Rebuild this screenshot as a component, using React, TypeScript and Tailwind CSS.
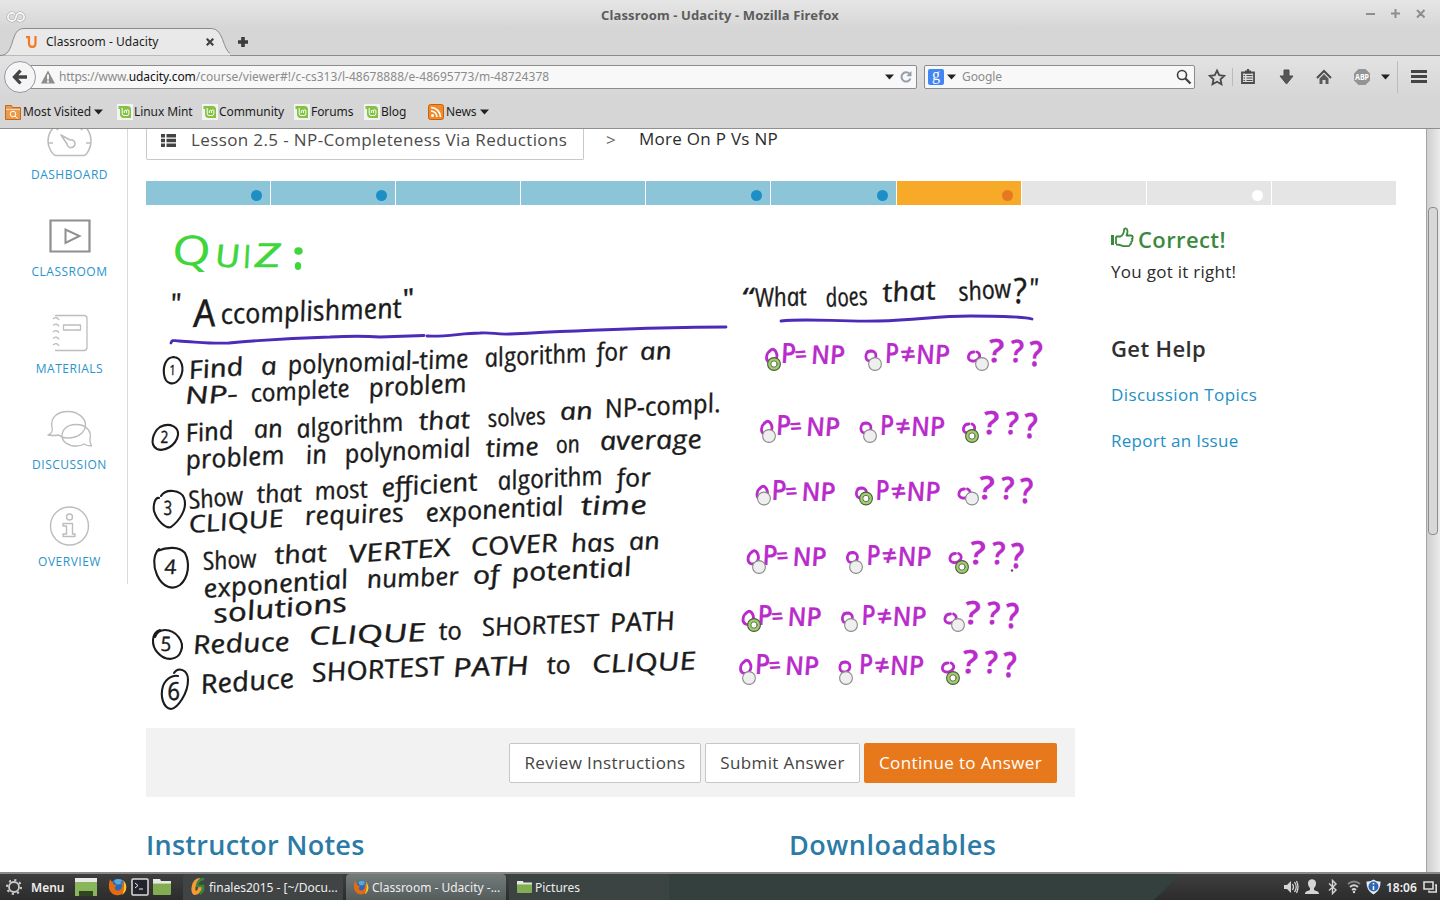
import React from "react";

type Word = [string, number, number, number, number, number?];

const ink: Word[] = [
  ['"', 172, 313, 11, 27, -2],
  ["A", 195, 327, 22, 38],
  ["ccomplishment", 222, 324, 181, 28, -2],
  ['"', 405, 308, 12, 26, -8],
  ["1", 170, 375, 6, 14, 0],
  ["Find", 190, 379, 55, 25, -4],
  ["a", 262, 375, 16, 25],
  ["polynomial-time", 289, 374, 181, 26, -2],
  ["algorithm", 486, 367, 102, 26, -3],
  ["for", 598, 361, 31, 25, -2],
  ["an", 641, 360, 32, 24],
  ["NP-", 186, 404, 53, 24, -2],
  ["complete", 252, 402, 99, 25, -3],
  ["problem", 370, 397, 98, 26, -3],
  ["2", 161, 443, 8, 17, 0],
  ["Find", 187, 442, 48, 25, -4],
  ["an", 255, 438, 29, 25],
  ["algorithm", 298, 438, 107, 26, -4],
  ["that", 420, 430, 51, 25, -2],
  ["solves", 489, 427, 58, 24, -3],
  ["an", 561, 420, 33, 24],
  ["NP-compl.", 606, 418, 116, 26, -3],
  ["problem", 187, 469, 99, 26, -3],
  ["in", 307, 464, 21, 26],
  ["polynomial", 346, 463, 126, 26, -3],
  ["time", 487, 457, 53, 25],
  ["on", 557, 453, 24, 24],
  ["average", 601, 450, 102, 26, -1],
  ["3", 164, 515, 9, 20, 0],
  ["Show", 190, 509, 55, 25, -5],
  ["that", 258, 503, 45, 25, -2],
  ["most", 316, 500, 53, 25, -3],
  ["efficient", 383, 497, 96, 26, -4],
  ["algorithm", 499, 490, 105, 26, -3],
  ["for", 618, 487, 34, 25, -2],
  ["CLIQUE", 190, 533, 95, 24, -4],
  ["requires", 306, 525, 99, 26, -2],
  ["exponential", 427, 522, 138, 26, -3],
  ["time", 582, 515, 66, 26, -1],
  ["4", 165, 574, 12, 20, 0],
  ["Show", 204, 570, 54, 25, -3],
  ["that", 276, 564, 52, 25, -3],
  ["VERTEX", 350, 563, 102, 25, -4],
  ["COVER", 472, 556, 87, 25, -3],
  ["has", 572, 552, 44, 25, -1],
  ["an", 630, 550, 31, 24],
  ["exponential", 205, 598, 145, 26, -4],
  ["number", 368, 588, 92, 25, -2],
  ["of", 474, 584, 27, 25],
  ["potential", 513, 582, 120, 26, -3],
  ["solutions", 215, 623, 134, 26, -5],
  ["5", 161, 651, 11, 20, 0],
  ["Reduce", 194, 654, 97, 26, -2],
  ["CLIQUE", 310, 645, 117, 25, -2],
  ["to", 440, 640, 23, 25],
  ["SHORTEST", 483, 636, 117, 25, -2],
  ["PATH", 611, 632, 65, 26, -2],
  ["6", 168, 700, 13, 25, 0],
  ["Reduce", 202, 694, 94, 27, -4],
  ["SHORTEST", 313, 682, 132, 26, -3],
  ["PATH", 454, 677, 76, 26, -2],
  ["to", 548, 674, 24, 25],
  ["CLIQUE", 593, 673, 104, 25, -2],
  ["“", 743, 306, 12, 25, -2],
  ["What", 756, 307, 52, 26, -2],
  ["does", 827, 307, 42, 26, -3],
  ["that", 884, 302, 53, 27, -3],
  ["show", 960, 301, 53, 26, -4],
  ["?", 1014, 303, 14, 35, 0],
  ['"', 1030, 297, 10, 26, 0],
];

const quizWords: Word[] = [
  ["Q", 173, 265, 39, 41, 0],
  ["U", 216, 267, 25, 31, 0],
  ["I", 244, 268, 8, 32, 0],
  ["Z", 255, 267, 27, 33, 0],
];

const rows = [
  { dx: 0, dy: 0, y: 364, xs: [774, 875, 982], on: 0 },
  { dx: -5, dy: 72, y: 436, xs: [769, 870, 972], on: 2 },
  { dx: -9.5, dy: 137, y: 498.5, xs: [764, 866, 972], on: 1 },
  { dx: -18.5, dy: 201.5, y: 567, xs: [759, 856, 962], on: 2 },
  { dx: -23.5, dy: 262, y: 625, xs: [754, 851, 958], on: 0 },
  { dx: -26, dy: 311, y: 678, xs: [749, 846, 953], on: 2 },
];

const optionWords: Word[] = [
  ["P", 782, 363, 15, 28, 0],
  ["=", 796, 363, 12, 24, -3],
  ["NP", 812, 364, 34, 26, 0],
  ["P", 886, 363, 14, 28, 0],
  ["≠", 902, 364, 15, 27, -3],
  ["NP", 917, 364, 34, 27, 0],
  ["?", 989, 362, 16, 32, 0],
  ["?", 1011, 362, 14, 31, 0],
  ["?", 1030, 366, 14, 35, 0],
];

function Hand({ w, color, weight, stroke }: { w: Word; color: string; weight?: number; stroke?: number }) {
  const [t, x, y, len, size, rot = -2] = w;
  return (
    <text
      transform={`translate(${x} ${y}) rotate(${rot}) skewX(8)`}
      fontSize={size}
      textLength={len}
      lengthAdjust="spacingAndGlyphs"
      fill={color}
      stroke={color}
      strokeWidth={stroke ?? 0.35}
      fontWeight={weight ?? 400}
      fontStyle="italic"
      fontFamily="'Open Sans', 'Noto Sans', sans-serif"
    >
      {t}
    </text>
  );
}

function QuizCanvas() {
  return (
    <svg viewBox="146 205 929 523" className="block h-[523px] w-[929px]" fill="none" strokeLinecap="round">
      {quizWords.map((w, i) => (
        <Hand key={i} w={w} color="#3fd53c" stroke={i === 0 ? 0.1 : 0.6} />
      ))}
      <g fill="#3fd53c">
        <ellipse cx="298.5" cy="251" rx="4.2" ry="3.8" />
        <ellipse cx="298" cy="266" rx="3.2" ry="4" />
      </g>
      {ink.map((w, i) => (
        <Hand key={i} w={w} color="#1b1b1b" />
      ))}
      <g stroke="#4b2bb8" strokeWidth="2.8">
        <path d="M171 343C172 339 174 341 179 341C198 342 213 344 229 343C262 340 290 338 330 337C350 336 366 336 380 337L424 335.500M427 336C447 337 462 333 480 333C493 332 496 335 510 334C570 331 660 327 726 327" />
        <path d="M781 321C808 318 838 322 878 321C920 320 935 316 970 316C995 316 1022 316 1032 319" />
      </g>
      <g stroke="#1b1b1b" strokeWidth="2.1">
        <path d="M174 357C166 357 163 366 164 374C165 384 174 387 180 378C185 369 182 357 173 357" />
        <path d="M160 427C170 422 179 427 178 435C176 446 164 452 157 449C149 445 153 432 160 427" />
        <path d="M159 498C155 497 153 505 154 511C157 521 166 529 171 527C179 521 188 509 184 498C181 490 166 488 161 496" />
        <path d="M159 549C153 555 153 566 157 575C163 588 173 590 180 585C189 577 190 563 185 553C179 546 167 547 157 551" />
        <path d="M160 630C151 633 151 646 158 653C166 662 178 660 181 651C185 642 176 630 165 630C160 630 157 632 155 637" />
        <path d="M174 673C178 667 188 669 188 680C188 693 178 708 171 709C163 708 160 696 163 686C166 678 173 675 178 676" />
      </g>
      {rows.map((r, ri) => (
        <g key={ri}>
          <g transform={`translate(${r.dx} ${r.dy})`}>
            {optionWords.map((w, i) => (
              <Hand key={i} w={w} color="#b92ccb" weight={600} stroke={0.2} />
            ))}
            <g stroke="#b92ccb" strokeWidth="2.800">
              <path d="M771 350C766 353 765 360 769 362C774 364 779 358 776 352C774 348 771 349 770 351" />
              <path d="M870 351C864 353 865 361 870 361C877 361 878 352 872 351C869 351 867 352 867 353" />
              <path d="M974 352C968 352 966 360 972 361C978 362 983 355 977 352" />
            </g>
          </g>
          {r.xs.map((x, i) => (
            <g key={x}>
              <circle cx={x} cy={r.y} r="6.4" fill={r.on === i ? "#9fd06a" : "#efefef"} stroke={r.on === i ? "#4d5a42" : "#8a8a8a"} strokeWidth="1.1" />
              {r.on === i && <circle cx={x} cy={r.y} r="3.2" fill="#fff" stroke="#5e704e" strokeWidth="1" />}
            </g>
          ))}
        </g>
      ))}
      <circle cx="1012" cy="570.5" r="1.2" fill="#555" />
    </svg>
  );
}

function Caret() {
  return (
    <svg viewBox="0 0 9 6" className="h-[6px] w-[9px] shrink-0">
      <path d="M0 .5h9L4.500 5.500z" fill="#222" />
    </svg>
  );
}

function MintIcon() {
  return (
    <svg viewBox="0 0 16 16" className="h-4 w-4 shrink-0">
      <rect width="16" height="16" fill="#f3f3f3" />
      <path d="M1.500 2H10.500a3.500 3.500 0 0 1 3.500 3.500V14H7a4 4 0 0 1-4-4V5H1.500z" fill="#84c341" />
      <path d="M5.200 4v5.500a2 2 0 0 0 2 2h2.700a2 2 0 0 0 2-2V7a1.200 1.200 0 0 0-2.400 0v2M9.500 7a1.200 1.200 0 0 0-2.200 0v2" fill="none" stroke="#fff" strokeWidth="1" />
    </svg>
  );
}

function Folder() {
  return (
    <svg viewBox="0 0 18 16" className="h-full w-full" preserveAspectRatio="none">
      <path d="M0 0h7l1 2h10v4H0z" fill="#e8e8e8" />
      <rect y="4" width="18" height="12" rx="1" fill="#82ad52" />
      <path d="M0 4.500h18" stroke="#b8d795" />
    </svg>
  );
}

function FirefoxIcon() {
  return (
    <svg viewBox="0 0 18 18" className="h-full w-full">
      <circle cx="9" cy="9" r="8.200" fill="#2c6bb3" />
      <path d="M5 3c3-3 7-2 9 0-2 0-3 1-2 3-2 0-3 1-5 0z" fill="#5aa9de" />
      <path d="M1 1c1 2 2 3 3 3-1 2 1 3 3 3 0 2-2 2-1 4 1 2 4 2 6 0 2-3 1-5 0-7 3 1 3 4 3 5 1-2 1-4 0-6 3 3 3 8 0 11-4 5-11 4-14-1C-1 9 0 5 1 1z" fill="#e66b10" />
      <path d="M14 2c4 4 5 11-1 15 2-4 3-9 1-15z" fill="#f9c831" />
    </svg>
  );
}

function Toolbars() {
  return (
    <div className="flex h-[129px] shrink-0 flex-col border-b border-[#8f8f8f] bg-[#d6d6d6] font-['Noto_Sans',sans-serif] text-[12px] text-[#1d1d1d]">
      <div className="relative flex h-7 shrink-0 items-center justify-center bg-gradient-to-b from-[#e6e6e6] to-[#d6d6d6] pt-[3px] text-[13px] font-bold text-[#5c5c5c]">
        <span className="tracking-[0.13px]">Classroom - Udacity - Mozilla Firefox</span>
        <svg viewBox="0 0 20 14" className="absolute left-[6px] top-[10px] h-[14px] w-5" fill="none">
          <path d="M9 4.500A4 4 0 1 0 9 9.500L11 4.500A4 4 0 1 1 11 9.500" stroke="#aaa" strokeWidth="3" />
          <path d="M9 4.500A4 4 0 1 0 9 9.500L11 4.500A4 4 0 1 1 11 9.500" stroke="#f6f6f6" strokeWidth="1.800" />
        </svg>
        <svg viewBox="0 0 62 12" className="absolute right-[13px] top-2 h-3 w-[62px]" stroke="#8e8e8e" strokeWidth="2">
          <path d="M1 6h9M26 5.500h9M30.500 1v9M52 2l7.500 7.500M59.500 2L52 9.500" />
        </svg>
      </div>
      <div className="flex h-7 shrink-0">
        <div className="relative flex h-7 w-[230px] shrink-0 items-center">
          <svg viewBox="0 0 230 28" className="absolute inset-0 h-7 w-[230px]">
            <path d="M0 27.500C16 27.500 9 .5 24 .5H211C226 .5 221 27.500 236 27.500V28H0z" fill="#e9e9e9" stroke="#8b8b8b" />
          </svg>
          <svg viewBox="0 0 12 13" className="relative ml-[26px] h-[13px] w-3" fill="none" stroke="#f07a27" strokeWidth="2.200">
            <path d="M0 1.200h3v6c0 5 6.500 5 6.500 0V0" />
          </svg>
          <span className="relative ml-2 w-[158px] whitespace-nowrap tracking-[0.04px]">Classroom - Udacity</span>
          <svg viewBox="0 0 8 8" className="relative ml-[2px] h-2 w-2" stroke="#444" strokeWidth="2.200">
            <path d="M.7.7l6.600 6.600M7.300.7L.7 7.300" />
          </svg>
        </div>
        <div className="flex flex-1 items-center border-b border-[#8b8b8b] pl-2">
          <svg viewBox="0 0 10 10" className="h-[10px] w-[10px]" stroke="#3c3c3c" strokeWidth="3.600">
            <path d="M0 5h10M5 0v10" />
          </svg>
        </div>
      </div>
      <div className="flex h-[41px] shrink-0 items-center bg-gradient-to-b from-[#e3e3e3] to-[#d6d6d6] pl-1">
        <div className="z-10 flex h-8 w-8 shrink-0 items-center justify-center rounded-full border border-[#8f99a5] bg-[#f5f5f5]">
          <svg viewBox="0 0 16 16" className="h-4 w-4" fill="none" stroke="#444" strokeWidth="3.300">
            <path d="M8.500 1.500L2.500 8l6 6.500M3 8h12" />
          </svg>
        </div>
        <div className="-ml-2 flex h-6 w-[889px] shrink-0 items-center rounded-r-[2px] border border-[#8c8c8c] bg-[#f8f8f8] pl-3">
          <svg viewBox="0 0 14 14" className="h-[14px] w-[14px]">
            <path d="M7 0.500L14 13.500H0z" fill="#8e8e8e" strokeLinejoin="round" />
            <path d="M7 4.500v5M7 10.500v2" stroke="#fff" strokeWidth="1.800" />
          </svg>
          <span className="ml-1 flex-1 whitespace-nowrap text-[#8b8b8b]">
            <span className="tracking-[-0.23px]">https://www.</span><span className="tracking-[-0.06px] text-[#111]">udacity.com</span><span className="tracking-[0.03px]">/course/viewer#!/c-cs313/l-48678888/e-48695773/m-48724378</span>
          </span>
          <Caret />
          <svg viewBox="0 0 12 12" className="ml-[6px] mr-1 h-3 w-3" fill="none" stroke="#93a0ab" strokeWidth="2">
            <path d="M10.500 7.500A4.600 4.600 0 1 1 9.500 2.800" />
            <path d="M11.500 0v5.200H6.300z" fill="#93a0ab" stroke="none" />
          </svg>
        </div>
        <div className="ml-[7px] flex h-6 w-[271px] shrink-0 items-center rounded-[2px] border border-[#8c8c8c] bg-[#f8f8f8] pl-[3px]">
          <span className="flex h-4 w-4 items-center justify-center rounded-[2px] bg-[#4285f4] pb-[3px] font-['Liberation_Serif',serif] text-[16px] leading-none text-white">g</span>
          <span className="ml-[3px] flex"><Caret /></span>
          <span className="ml-[6px] flex-1 tracking-[-0.1px] text-[#8b8b8b]">Google</span>
          <svg viewBox="0 0 16 16" className="mr-[2px] h-4 w-4" fill="none" stroke="#3d3d3d">
            <circle cx="6" cy="6" r="4.500" strokeWidth="1.600" />
            <path d="M9.500 9.500l5 5" strokeWidth="2.200" />
          </svg>
        </div>
        <svg viewBox="1200 60 240 32" className="ml-[5px] h-8 w-[240px] shrink-0" fill="none" stroke="#4b4b4b">
          <path d="M1217 69.500l2.200 4.700 5 .6-3.700 3.500 1 5-4.500-2.500-4.500 2.500 1-5-3.700-3.500 5-.6z" strokeWidth="1.800" />
          <path d="M1232.500 67v18M1397.500 60v32" stroke="#b4bcc4" strokeWidth="1" />
          <path d="M1242 71.500h12v10.500h-12z" strokeWidth="1.800" />
          <path d="M1245 69.500h6v3h-6zM1247 68h2v2h-2z" fill="#4b4b4b" stroke="none" />
          <path d="M1243.500 74.500h1.500M1246.500 74.500h6M1243.500 77h1.500M1246.500 77h6M1243.500 79.500h1.500M1246.500 79.500h6" strokeWidth="1.200" />
          <path d="M1284 69h5v6h4l-6.500 8-6.500-8h4z" fill="#565656" strokeWidth="1" />
          <path d="M1317 77l7-7 7 7" strokeWidth="2" />
          <path d="M1319.500 77.500l4.500-4.500 4.500 4.500v5.500h-3v-4h-3v4h-3z" fill="#5b5b5b" stroke="none" />
          <path d="M1358.500 68h7l4.500 4.500v7l-4.500 4.500h-7l-4.500-4.500v-7z" fill="#949494" stroke="none" />
          <text x="1355" y="79" textLength="14" lengthAdjust="spacingAndGlyphs" fontSize="8" fontWeight="700" fill="#fff" stroke="none">ABP</text>
          <path d="M1381 73.500h9l-4.500 5z" fill="#222" stroke="none" />
          <path d="M1411 70.500h16M1411 75.500h16M1411 80.500h16" stroke="#444" strokeWidth="2.800" />
        </svg>
      </div>
      <div className="flex flex-1 items-center pb-px pl-[5px] tracking-[-0.08px]">
        <div className="flex w-[112px] items-center">
          <svg viewBox="0 0 16 16" className="mr-[2px] h-4 w-4" fill="#e99a4a" stroke="#c8661a">
            <path d="M.5 1.500h6l1 2h8v12H.5z" />
            <path d="M1 5.500h14" stroke="#f6d9b8" />
            <g fill="none" stroke="#fff"><circle cx="8" cy="10" r="2.800" /><path d="M10 12l2.500 2.500" /></g>
          </svg>
          <span className="mr-[3px] w-[68px] whitespace-nowrap">Most Visited</span>
          <Caret />
        </div>
        <div className="flex w-[85px] items-center gap-px whitespace-nowrap"><MintIcon />Linux Mint</div>
        <div className="flex w-[92px] items-center gap-px"><MintIcon />Community</div>
        <div className="flex w-[70px] items-center gap-px"><MintIcon />Forums</div>
        <div className="flex w-[64px] items-center gap-px"><MintIcon />Blog</div>
        <div className="flex items-center gap-[2px]">
          <svg viewBox="0 0 16 16" className="h-4 w-4">
            <rect x=".5" y=".5" width="15" height="15" rx="2" fill="#f18a2b" stroke="#c9600d" />
            <circle cx="4.500" cy="11.500" r="1.500" fill="#fff" />
            <path d="M3 7a6 6 0 0 1 6 6M3 3.500A9.500 9.500 0 0 1 12.500 13" fill="none" stroke="#fff" strokeWidth="1.700" />
          </svg>
          <span className="w-[32px]">News</span>
          <Caret />
        </div>
      </div>
    </div>
  );
}

const sideIcons: Record<string, React.ReactNode> = {
  DASHBOARD: (
    <path d="M9 38.500h28c2 0 7-7 7-14C44 12 34 3 23 3S1 12 1 24.500C1 31 6 38.500 9 38.500zM1 26h5M39 26h5M23 3v5M8 10l3 3M37 10l-3 3M27 24a4 4 0 1 1-7 3L14 18l9 5a4 4 0 0 1 4 1z" strokeWidth="1.600" />
  ),
  CLASSROOM: (
    <g stroke="#8f8f8f">
      <path d="M3.500 6.500h39v31h-39z" strokeWidth="2.200" strokeLinejoin="miter" />
      <path d="M18.500 15.500v13.500l14-7z" strokeWidth="2" strokeLinejoin="miter" />
    </g>
  ),
  MATERIALS: (
    <path d="M8 4.500h29q3 0 3 3v29q0 3-3 3H8M16.500 14h17v5h-17zM6 8q4-3 6 1M6 14.500q4-3 6 1M6 21q4-3 6 1M6 27.500q4-3 6 1M6 34q4-3 6 1" strokeWidth="1.300" />
  ),
  DISCUSSION: (
    <path d="M1 28c3-1 5-4 4-8C3 10 11 4.500 21 4.500S38.500 11 38.500 18 31 31 21 31c-4 0-7-1-9-3Q7 29 1 28zM44.500 39c-1-2-2-4-1.500-7 2-8-4-14.500-14-14.500s-14 6-14 11.500 6 10 14 10q5 0 8-2 3 2 7.500 2z" strokeWidth="1.400" />
  ),
  OVERVIEW: (
    <g strokeWidth="1.400">
      <circle cx="22.500" cy="22" r="19" />
      <circle cx="22.500" cy="13" r="3" />
      <path d="M16 19.500h9.500V30h2.500v2.500H16V30h3.500v-8H16z" />
    </g>
  ),
};

function Sidebar() {
  return (
    <nav className="flex h-[455px] w-[128px] shrink-0 flex-col border-r border-[#d9d9d9]">
      {Object.keys(sideIcons).map((name, i) => (
        <div key={name} className={`flex shrink-0 flex-col items-center justify-end gap-1 pl-[11px] ${i === 0 ? "h-[56px]" : "h-[96.800px]"}`}>
          <svg viewBox="0 0 46 44" className="ml-px h-[44px] w-[46px] shrink-0" fill="none" stroke="#bdbdbd" strokeLinejoin="round">
            {sideIcons[name]}
          </svg>
          <span className="ml-px h-5 text-[12px] leading-5 tracking-[0.5px] text-[#2a93c9]">{name}</span>
        </div>
      ))}
    </nav>
  );
}

const segments = [
  ["bg-[#8cc5d8]", "bg-[#1e8fc6]"],
  ["bg-[#8cc5d8]", "bg-[#1e8fc6]"],
  ["bg-[#8cc5d8]", ""],
  ["bg-[#8cc5d8]", ""],
  ["bg-[#8cc5d8]", "bg-[#1e8fc6]"],
  ["bg-[#8cc5d8]", "bg-[#1e8fc6]"],
  ["bg-[#f7a928]", "bg-[#e87722]"],
  ["bg-[#e5e5e5]", ""],
  ["bg-[#e5e5e5]", "bg-white"],
  ["bg-[#e5e5e5]", ""],
];

function Lesson() {
  return (
    <main className="ml-[18px] flex w-[1250px] shrink-0 flex-col">
      <div className="flex h-[31px] shrink-0 items-start">
        <div className="flex h-[31px] w-[438px] items-center rounded-b-[2px] border border-t-0 border-[#c9c9c9] pb-[8px] pl-[14px] text-[17px] text-[#4b4b4b]">
          <svg viewBox="0 0 15 13" className="mr-[15px] h-[13px] w-[15px]" fill="#444">
            <path d="M0 0h4v3.500H0zM5.500 0H15v3.500H5.500zM0 4.800h4v3.500H0zM5.500 4.800H15v3.500H5.500zM0 9.500h4V13H0zM5.500 9.500H15V13H5.500z" />
          </svg>
          <span className="whitespace-nowrap tracking-[0.38px]">Lesson 2.5 - NP-Completeness Via Reductions</span>
        </div>
        <span className="ml-[22px] w-[33px] text-[17px] leading-[21px] text-[#666]">&gt;</span>
        <span className="text-[17px] leading-[19px] tracking-[0.28px] text-[#2b2b2b]">More On P Vs NP</span>
      </div>
      <div className="mt-[21px] grid h-6 shrink-0 grid-cols-10 gap-px">
        {segments.map(([bg, dot], i) => (
          <div key={i} className={`flex items-center justify-end pr-2 pt-1 ${bg}`}>
            {dot && <span className={`h-[11px] w-[11px] rounded-full ${dot}`} />}
          </div>
        ))}
      </div>
      <div className="flex shrink-0">
        <div className="flex w-[929px] shrink-0 flex-col">
          <QuizCanvas />
          <div className="flex h-[69px] items-center justify-end gap-1 bg-[#f2f2f2] pr-[18px] text-[17px] tracking-[0.38px] text-[#444]">
            <button className="h-10 w-[192px] whitespace-nowrap rounded-[2px] border border-[#c6c6c6] bg-white">Review Instructions</button>
            <button className="h-10 w-[155px] whitespace-nowrap rounded-[2px] border border-[#c6c6c6] bg-white">Submit Answer</button>
            <button className="h-10 w-[193px] whitespace-nowrap rounded-[2px] bg-[#e8781c] text-white">Continue to Answer</button>
          </div>
        </div>
        <aside className="ml-9 flex flex-col pt-[19px] text-[17px] text-[#2b2b2b]">
          <div className="flex h-[30px] items-center text-[22px] font-semibold tracking-[0.4px] text-[#3a8a3d]">
            <svg viewBox="0 0 23 21" className="mb-1 mr-1 h-[21px] w-[23px]" fill="none" stroke="#3a8a3d" strokeWidth="1.800" strokeLinejoin="round">
              <path d="M1.500 8v10" strokeWidth="3" />
              <path d="M5 9.500v7.500M5 9.500h4.500C12 8 13 6 13 3c0-2.500 3.500-2 3.500 1 0 2-.5 3.500-1 4.500H20c2.500 0 2 3 .8 3.200 1.200 1 .5 2.800-.6 3 .6 1.300 0 2.500-1.200 2.500.2 1.300-.8 2-2 2h-4c-2 0-3-1.700-8-1.700" />
            </svg>
            Correct!
          </div>
          <p className="mt-px h-[34px] leading-[34px] tracking-[0.27px]">You got it right!</p>
          <h2 className="mt-[42px] h-[34px] text-[22px] font-semibold leading-[34px] tracking-[0.37px] text-[#303030]">Get Help</h2>
          <a className="mt-[13px] h-[34px] leading-[34px] tracking-[0.4px] text-[#1e8fc6]">Discussion Topics</a>
          <a className="mt-[12px] h-[34px] leading-[34px] tracking-[0.28px] text-[#1e8fc6]">Report an Issue</a>
        </aside>
      </div>
      <div className="flex shrink-0 pt-[28px] text-[27px] font-semibold leading-10 text-[#2b7ba6]">
        <h2 className="w-[643px] tracking-[0.27px]">Instructor Notes</h2>
        <h2 className="tracking-[0.52px]">Downloadables</h2>
      </div>
    </main>
  );
}

function Taskbar() {
  return (
    <div className="flex h-7 shrink-0 items-center border-t-2 border-[#898989] bg-gradient-to-b from-[#3e3e3e] to-[#2c2c2c] font-['Noto_Sans',sans-serif] text-[12px] text-[#eee]">
      <svg viewBox="0 0 18 18" className="ml-[5px] h-[18px] w-[18px]" fill="none" stroke="#ccc">
        <circle cx="9" cy="9" r="5" strokeWidth="1.800" />
        <circle cx="9" cy="9" r="7" strokeWidth="2" strokeDasharray="2.200 3.300" />
      </svg>
      <span className="ml-2 w-[44px] pt-[2px] font-semibold">Menu</span>
      <svg viewBox="0 0 22 18" className="h-[18px] w-[22px]">
        <rect width="22" height="18" fill="#89b65a" /><rect width="22" height="4" fill="#e9e9e9" /><rect x="4" y="13" width="14" height="5" fill="#324523" />
      </svg>
      <span className="ml-3 h-[18px] w-[18px]"><FirefoxIcon /></span>
      <svg viewBox="0 0 18 18" className="ml-1 h-[18px] w-[18px]">
        <rect x="1" y="1" width="16" height="16" rx="1" fill="#23232e" stroke="#ddd" strokeWidth="1.500" />
        <path d="M4 5l3 2.500L4 10M8 11h4" stroke="#eee" fill="none" />
      </svg>
      <span className="ml-1 h-[16px] w-[18px]"><Folder /></span>
      <div className="ml-3 flex h-[26px] w-[160px] items-center rounded-t bg-[#414444] pl-[7px]">
        <svg viewBox="0 0 16 18" className="mr-[3px] h-[18px] w-4" fill="none" strokeWidth="4">
          <path d="M10 2C3 2 2 15 5 15s5-3 5-6" stroke="#f59b32" /><path d="M7 9c0-5 3-8 7-8M8 8h5v4l-3 4" stroke="#36873b" strokeWidth="2.600" />
        </svg>
        <span className="whitespace-nowrap pt-[2px]">finales2015 - [~/Docu...</span>
      </div>
      <div className="ml-[3px] flex h-[26px] w-[160px] items-center rounded-t bg-gradient-to-b from-[#737b7b] to-[#555d5c] pl-2">
        <span className="mr-[3px] h-[15px] w-[15px]"><FirefoxIcon /></span>
        <span className="whitespace-nowrap pt-[2px]">Classroom - Udacity -...</span>
      </div>
      <div className="ml-[3px] flex h-[26px] w-[160px] items-center rounded-t bg-[#3c4343] pl-2">
        <span className="mr-[3px] h-[12px] w-[15px]"><Folder /></span>
        <span className="pt-[2px]">Pictures</span>
      </div>
      <svg viewBox="0 0 511 26" className="h-[26px] w-[511px]"><path d="M0 0h511l-26 26H0z" fill="#34403e" /></svg>
      <svg viewBox="1283 0 98 26" className="ml-[103px] h-[26px] w-[98px]" fill="none" stroke="#d5d5d5">
        <path d="M1284 11h3l4-4v12l-4-4h-3z" fill="#d5d5d5" stroke="none" />
        <path d="M1292.500 10q2 3 0 6M1294.500 8q3.500 5 0 10M1296.500 7q3 6 0 12" strokeWidth="1.300" />
        <path d="M1308 9c0-5 8-5 8 0 0 3-1 4-2 5v2c2 1 5 1 5 4h-14c0-3 3-3 5-4v-2c-1-1-2-2-2-5z" fill="#d5d5d5" stroke="none" />
        <path d="M1329 9.500l7 6.500-3.500 3.500v-13L1336 10l-7 6.500" strokeWidth="1.400" />
        <path d="M1348 10q6-5 12 0" stroke="#888" strokeWidth="1.800" />
        <path d="M1350 13q4-3.500 8 0M1352 16q2-2 4 0" strokeWidth="1.800" /><circle cx="1354" cy="18" r="1.200" fill="#d5d5d5" stroke="none" />
        <path d="M1373.500 5.500q3 2.500 7 2c0 6-2 10-7 13-5-3-7-7-7-13q4 .5 7-2z" fill="#e8eef5" stroke="none" />
        <circle cx="1373.500" cy="12.500" r="5" fill="#2e68b4" stroke="none" />
        <path d="M1373.500 9v1.500M1373.500 12v4" stroke="#fff" strokeWidth="1.500" />
      </svg>
      <span className="ml-[5px] w-[37px] pt-[2px] font-semibold">18:06</span>
      <svg viewBox="0 0 14 12" className="h-3 w-[14px]" fill="none" stroke="#ddd" strokeWidth="1.600">
        <path d="M1 1h9v7H1zM12 4h1.200v7H6V9.500" />
      </svg>
    </div>
  );
}

export default function App() {
  return (
    <div className="flex h-[900px] w-[1440px] flex-col overflow-hidden bg-white">
      <Toolbars />
      <div className="flex h-[743px] shrink-0 overflow-hidden bg-white font-['Open_Sans','Noto_Sans',sans-serif]">
        <Sidebar />
        <Lesson />
        <div className="ml-[30px] flex h-full w-[14px] flex-col border-l border-[#a5a5a5] bg-gradient-to-r from-[#cfcfcf] to-[#ebebeb] pl-px pt-[78px]">
          <div className="h-[328px] w-[10px] rounded-[4px] border border-[#8d8d8d] bg-[#d8d8d8]" />
        </div>
      </div>
      <Taskbar />
    </div>
  );
}
